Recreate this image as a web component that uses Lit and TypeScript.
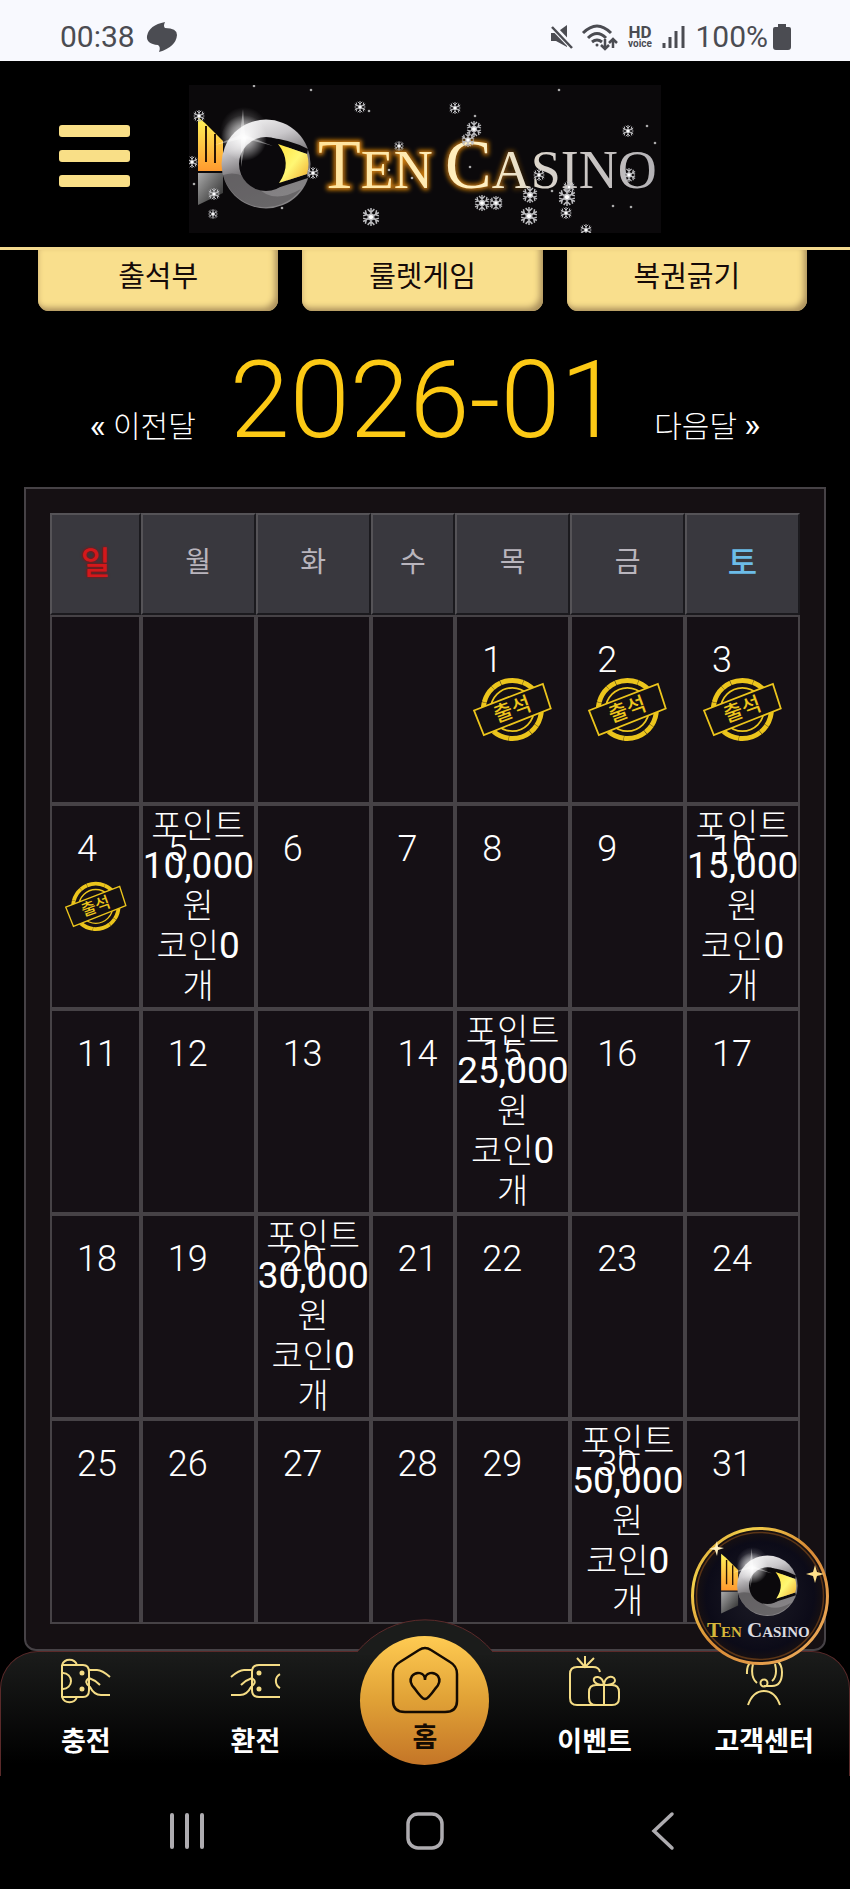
import { LitElement, html, css, svg, nothing } from "lit";
import { customElement } from "lit/decorators.js";

const FLAKES: [number, number, number][] = [
  [10, 31, 6], [171, 22, 6], [3, 77, 6], [25, 109, 6], [24, 129, 5], [124, 88, 6], [182, 132, 9],
  [210, 61, 5], [266, 23, 6], [285, 44, 8], [279, 55, 7], [293, 118, 8], [307, 118, 7], [341, 110, 8],
  [340, 131, 9], [350, 90, 6], [378, 112, 9], [380, 102, 6], [377, 128, 6], [397, 145, 6], [439, 46, 6], [440, 90, 7],
];
const DOTS: [number, number][] = [
  [65, 1], [122, 5], [180, 26], [286, 31], [370, 5], [458, 41], [466, 58], [5, 99], [93, 123], [223, 93],
  [281, 82], [363, 106], [424, 121], [442, 122], [200, 85],
];

const REWARDS: Record<number, string> = { 5: "10,000", 10: "15,000", 15: "25,000", 20: "30,000", 30: "50,000" };
const ATTENDED = new Set([1, 2, 3, 4]);
const DAYS = ["일", "월", "화", "수", "목", "금", "토"];

function fish(prefix: string) {
  return svg`
    <defs>
      <linearGradient id="${prefix}tail" x1="0" y1="0" x2="0" y2="1">
        <stop offset="0" stop-color="#fff45a"/><stop offset="1" stop-color="#ff9a2e"/>
      </linearGradient>
      <linearGradient id="${prefix}ring" x1="0" y1="0" x2="0.35" y2="1">
        <stop offset="0" stop-color="#fff"/><stop offset=".35" stop-color="#c9c7ca"/>
        <stop offset=".6" stop-color="#7d7a7d"/><stop offset="1" stop-color="#858385"/>
      </linearGradient>
      <linearGradient id="${prefix}fin" x1="0" y1="0" x2="1" y2="1">
        <stop offset="0" stop-color="#aaa"/><stop offset="1" stop-color="#222"/>
      </linearGradient>
      <radialGradient id="${prefix}glow">
        <stop offset="0" stop-color="#fff"/><stop offset=".35" stop-color="#fff" stop-opacity=".6"/>
        <stop offset="1" stop-color="#fff" stop-opacity="0"/>
      </radialGradient>
      <linearGradient id="${prefix}beak" x1="0" y1="0" x2="1" y2="1">
        <stop offset="0" stop-color="#ffe23e"/><stop offset=".5" stop-color="#fff774"/><stop offset="1" stop-color="#f0a92c"/>
      </linearGradient>
    </defs>
    <path d="M9 32 16 38 34 56V86H9Z" fill="url(#${prefix}tail)"/>
    <path d="M17 41V77M26 49V78" stroke="#2a1404" stroke-width="2"/>
    <path d="M9 88H34V108L9 120Z" fill="url(#${prefix}fin)"/>
    <circle cx="55" cy="46" r="24" fill="url(#${prefix}glow)" opacity=".45"/>
    <circle cx="77" cy="79" r="44.500" fill="url(#${prefix}ring)"/>
    <path d="M34 90Q52 84 68 102T112 104A44 44 0 0 1 34 90Z" fill="#444244" opacity=".45"/>
    <circle cx="77" cy="79" r="27" fill="#0b090c"/>
    <path d="M80 53Q100 54 119 64L118 69 89 59ZM90 98 118 89 119 93Q104 98 88 103Z" fill="#0b090c"/>
    <path d="M89 59 118 69Q121 79 118 89L90 98Q104 78 89 59Z" fill="url(#${prefix}beak)"/>
    <circle cx="55" cy="53" r="23" fill="url(#${prefix}glow)"/>
    <path d="M54 24 56 50 84 61 57 54 52 82 52 54 26 60 51 50Z" fill="#fff" opacity=".4"/>`;
}

const stamp = html`<svg class="stamp" viewBox="0 0 80 66" role="img" aria-label="출석">
  <g fill="none" stroke="#ecc51c">
    <circle cx="40" cy="33" r="29.500" stroke-width="5" stroke-dasharray="17 .3 9 .4 23 .3"/>
    <circle cx="40" cy="33" r="22" stroke-width="1.800"/>
    <path d="M1 34 71 7 79 32 11 59Z" fill="#141013" stroke-width="1.800"/>
  </g>
  <text class="stamp-text" x="40" y="40" text-anchor="middle" transform="rotate(-20 40 33)" fill="#ecc51c">출석</text>
</svg>`;

@customElement("app-root")
export class AppRoot extends LitElement {
  static styles = css`
    :host {
      display: block;
      background: #000;
      color: #fff;
      font-family: Roboto, "Noto Sans CJK KR", sans-serif;
    }
    * { box-sizing: border-box; }
    a { color: inherit; text-decoration: none; }
    button { font: inherit; border: 0; margin: 0; padding: 0; background: none; color: inherit; cursor: pointer; }
    svg { display: block; overflow: visible; }

    .status {
      display: flex;
      justify-content: space-between;
      align-items: center;
      height: 61px;
      padding: 13px 59px 0 60px;
      background: #f8f9fe;
      color: #4b4c52;
      font-size: 30px;
      line-height: 36px;
    }
    .status-side { display: flex; align-items: center; gap: 11px; }
    .status-right { gap: 8px; }
    .level { display: flex; align-items: center; gap: 5px; margin-left: 2px; }
    .hd { font-family: Roboto, sans-serif; font-weight: 700; }
    .hd-top { font-size: 17px; }
    .hd-bottom { font-size: 10px; }

    .header {
      display: grid;
      grid-template-columns: 1fr auto 1fr;
      align-items: center;
      height: 189px;
      padding: 9px 59px 0;
      border-bottom: 3px solid #f3d98f;
    }
    .menu { display: grid; gap: 13px; width: 71px; padding-bottom: 6px; }
    .menu i { display: block; height: 12px; border-radius: 3px; background: #f9df87; }
    .logo { display: block; background: #0b090b; }
    .logo svg { overflow: hidden; }
    .brand { font-family: "Liberation Serif", serif; }
    .brand-big { font-size: 70px; }
    .brand-small { font-size: 54px; }
    .fab-big { font-size: 21px; }
    .fab-small { font-size: 15px; }

    .tabs { display: flex; gap: 24px; padding: 0 43px 0 38px; }
    .tab {
      flex: 1;
      height: 61px;
      padding-bottom: 8px;
      border-radius: 0 0 11px 11px;
      background: #f9df8d;
      box-shadow: inset -5px -5px 6px -2px #a98f5c, inset 3px 0 5px -2px #d6b977;
      color: #150a08;
      font-size: 29px;
      line-height: 40px;
      font-weight: 400;
    }

    .month {
      display: flex;
      justify-content: center;
      align-items: baseline;
      gap: 34px;
      height: 176px;
      padding-top: 27px;
    }
    .month h1 { margin: 0; color: #fcc915; font-size: 108px; line-height: 124px; font-weight: 300; }
    .step { font-size: 30px; line-height: 40px; font-weight: 300; }
    .arrow { font-size: 34px; font-weight: 400; }

    .panel {
      margin: 0 24px;
      padding: 24px 24px 25px;
      border: 2px solid #464246;
      border-radius: 0 0 12px 12px;
      background: #151013;
    }
    .calendar { width: 100%; table-layout: fixed; border-collapse: separate; border-spacing: 0; }
    .narrow-a { width: 12.1%; }
    .narrow-b { width: 11.3%; }
    th {
      height: 102px;
      padding: 0 0 9px;
      border: 2px solid;
      border-color: #555357 #1b1a1e #1b1a1e #555357;
      background: #39383e;
      color: #b9b5bd;
      font-size: 28px;
      font-weight: 400;
    }
    .sun { color: #d3181b; font-size: 32px; font-weight: 500; text-shadow: 0 0 3px #a00; }
    .sat { color: #6cbce8; font-size: 32px; font-weight: 500; }
    td {
      position: relative;
      height: 205px;
      padding: 0;
      border: 2px solid #464246;
      background: #151015;
      text-align: center;
      vertical-align: middle;
    }
    .first td { height: 189px; }
    .date {
      position: absolute;
      top: 22px;
      left: 25px;
      font-size: 36px;
      line-height: 42px;
      font-weight: 300;
    }
    .reward { margin: 0 0 1px; font-size: 34px; line-height: 40px; font-weight: 300; }
    .reward b { font-size: 37px; line-height: 30px; font-weight: 400; }
    .stamp { width: 71%; margin: 0 auto; }
    .stamp-text { font-family: "Noto Sans CJK KR", sans-serif; font-size: 21px; font-weight: 500; }

    .dock {
      position: relative;
      display: grid;
      grid-template-columns: repeat(5, 1fr);
      height: 125px;
      border: 1px solid #5b2a2a;
      border-bottom: 0;
      border-radius: 38px 38px 0 0;
      background: linear-gradient(#1b1c1b, #000 90%);
    }
    .bump { position: absolute; left: 50%; top: -33px; margin-left: -70px; }
    .item {
      display: flex;
      flex-direction: column;
      align-items: center;
      gap: 16px;
      padding-top: 4px;
      font-size: 27px;
      line-height: 40px;
      font-weight: 700;
      white-space: nowrap;
    }
    .home {
      position: relative;
      justify-self: center;
      width: 129px;
      height: 129px;
      margin-top: -16px;
      padding-top: 10px;
      gap: 6px;
      border-radius: 50%;
      background: linear-gradient(#ffcb52, #e0a136 50%, #c47527);
      color: #140b02;
      font-size: 27px;
      line-height: 36px;
    }
    .fab { position: absolute; right: 20px; top: -125px; }

    .system { display: flex; align-items: center; justify-content: center; gap: 200px; height: 113px; padding-bottom: 4px; }
    .system button { display: flex; justify-content: center; width: 38px; }
  `;

  private cell(day: number) {
    if (day < 1) return html`<td></td>`;
    return html`<td>
      ${REWARDS[day]
        ? html`<p class="reward">포인트<br /><b>${REWARDS[day]}</b><br />원<br />코인<b>0</b><br />개</p>`
        : nothing}
      ${ATTENDED.has(day) ? stamp : nothing}
      <span class="date">${day}</span>
    </td>`;
  }

  private statusBar() {
    return html`<div class="status">
      <div class="status-side">
        <span>00:38</span>
        <svg width="32" height="30" viewBox="0 0 32 30" fill="#4b4c52"><path d="M19 0Q17 4 19 6Q31 6 31 13Q30 25 13 30Q15 25 12 23Q0 22 1 14Q3 3 19 0Z"/></svg>
      </div>
      <div class="status-side status-right">
        <svg width="24" height="24" viewBox="0 0 24 24"><path d="M1 8H6L17 0V22L6 16H1Z" fill="#4b4c52"/><path d="M1 0 23 23" stroke="#f8f9fe" stroke-width="6"/><path d="M2 2 22 23" stroke="#4b4c52" stroke-width="2.500"/></svg>
        <svg width="36" height="27" viewBox="0 0 36 27" fill="none" stroke="#4b4c52" stroke-width="3"><path d="M1 9Q15-5 29 9M6 14Q15 5 24 14M10 18Q15 14 20 18"/><path d="M23 15V25M19 21 23 25 27 21M31 24V15M27 19 31 15 35 19" stroke-width="2.500"/><circle cx="15" cy="21" r="1.500" fill="#4b4c52" stroke="none"/></svg>
        <svg class="hd" width="28" height="24" viewBox="0 0 28 24" fill="#4b4c52" text-anchor="middle"><text class="hd-top" x="14" y="13">HD</text><text class="hd-bottom" x="14" y="22">voice</text></svg>
        <svg width="23" height="24" viewBox="0 0 23 24" stroke="#4b4c52" stroke-width="3"><path d="M2 18V23M8 12V23M14 6V23M21 1V23"/></svg>
        <div class="level"><span>100%</span>
          <svg width="18" height="26" viewBox="0 0 18 26" fill="#4b4c52"><path d="M5 0H13V3H16Q18 3 18 5V23Q18 26 15 26H3Q0 26 0 23V5Q0 3 2 3H5Z"/></svg>
        </div>
      </div>
    </div>`;
  }

  private logo() {
    return html`<a class="logo" href="#" aria-label="Ten Casino">
      <svg width="472" height="148" viewBox="0 0 472 148">
        ${fish("l")}
        <defs>
          <linearGradient id="gold" gradientUnits="userSpaceOnUse" x1="125" y1="0" x2="465" y2="0">
            <stop offset="0" stop-color="#ffe39a"/><stop offset=".5" stop-color="#fff0c4"/>
            <stop offset=".68" stop-color="#d8d2cc"/><stop offset="1" stop-color="#b4b2b6"/>
          </linearGradient>
          <linearGradient id="halo" gradientUnits="userSpaceOnUse" x1="125" y1="0" x2="465" y2="0">
            <stop offset="0" stop-color="#e58a10"/><stop offset=".5" stop-color="#b87010"/><stop offset=".64" stop-color="#c87a10" stop-opacity="0"/>
          </linearGradient>
          <filter id="soft" x="-10%" y="-30%" width="120%" height="160%"><feGaussianBlur stdDeviation="2"/></filter>
        </defs>
        <g class="brand" aria-hidden="true" fill="none" stroke="url(#halo)" stroke-width="4" filter="url(#soft)">
          <text x="129" y="103"><tspan class="brand-big">T</tspan><tspan class="brand-small">EN</tspan></text>
          <text x="256" y="103"><tspan class="brand-big">C</tspan><tspan class="brand-small">ASINO</tspan></text>
        </g>
        <g class="brand" fill="url(#gold)">
          <text x="129" y="103"><tspan class="brand-big">T</tspan><tspan class="brand-small">EN</tspan></text>
          <text x="256" y="103"><tspan class="brand-big">C</tspan><tspan class="brand-small">ASINO</tspan></text>
        </g>
        ${FLAKES.map(([x, y, r]) => svg`<g transform="translate(${x} ${y}) scale(${r / 8})" stroke="#bdbdc0" stroke-width="1.300" fill="none">
          <path d="M0-8V8M-7-4 7 4M-7 4 7-4M-3-7 0-4 3-7M-3 7 0 4 3 7M-7-1-4-2-5-6M7 1 4 2 5 6M-7 1-4 2-5 6M7-1 4-2 5-6"/><circle r="2.500" fill="#fff"/></g>`)}
        ${DOTS.map(([x, y]) => svg`<circle cx="${x}" cy="${y}" r="1.300" fill="#aaa"/>`)}
      </svg>
    </a>`;
  }

  private dock() {
    return html`<nav class="dock">
      <svg class="bump" width="140" height="36" viewBox="0 0 140 36"><path d="M0 36 2 33A88 88 0 0 1 138 33L140 36Z" fill="#1b1c1b"/><path d="M2 33A88 88 0 0 1 138 33" fill="none" stroke="#5b2a2a"/></svg>
      <a class="item" href="#">
        <svg width="50" height="50" viewBox="0 0 50 50" fill="none" stroke="#f4dc85" stroke-width="2"><path d="M1 9A8 8 0 0 1 16 9M1 9V41A8 8 0 0 0 16 41"/><path d="M2 9H22Q28 9 28 16V34Q28 41 22 41H2M2 17A8 8 0 0 1 2 33M28 14H36Q41 14 49 21M28 22Q22 26 29 31Q33 39 40 39H49M28 22Q34 24 39 29"/><circle cx="21" cy="17" r="1.500" fill="#f4dc85"/><circle cx="21" cy="33" r="1.500" fill="#f4dc85"/></svg>
        <span>충전</span>
      </a>
      <a class="item" href="#">
        <svg width="50" height="50" viewBox="0 0 50 50" fill="none" stroke="#f4dc85" stroke-width="2"><path d="M50 9H29Q22 9 22 16V34Q22 41 29 41H50M50 18A8 8 0 0 0 50 32M22 14H14Q9 14 1 21M22 22Q28 26 21 31Q17 39 10 39H1M22 22Q16 24 11 29"/><circle cx="29" cy="17" r="1.500" fill="#f4dc85"/><circle cx="29" cy="33" r="1.500" fill="#f4dc85"/></svg>
        <span>환전</span>
      </a>
      <a class="item home" href="#">
        <svg width="66" height="68" viewBox="0 0 66 68" fill="none" stroke="#140b02" stroke-width="2.500"><path d="M27 4Q33 0 39 4L58 16Q65 20 65 28V55Q65 66 53 66H13Q1 66 1 55V28Q1 20 8 16Z"/><path d="M33 53Q30 53 23 43Q16 36 20 30C24 25 33 26 33 34C33 26 42 25 46 30Q50 36 43 43Q36 53 33 53Z"/></svg>
        <span>홈</span>
      </a>
      <a class="item" href="#">
        <svg width="52" height="50" viewBox="0 0 52 50" fill="none" stroke="#f4dc85" stroke-width="2"><path d="M31 16Q30 11 24 11H8Q1 11 1 18V42Q1 49 8 49H43Q50 49 50 42V36Q50 29 43 29H27Q20 29 20 36V42Q20 49 27 49M16 0V11M8 2 16 11 25 2M35 29V49M35 29C22 29 23 20 29 21Q34 22 35 29C36 20 42 20 45 22C48 26 44 29 35 29"/></svg>
        <span>이벤트</span>
      </a>
      <a class="item" href="#">
        <svg width="52" height="50" viewBox="0 0 52 50" fill="none" stroke="#f4dc85" stroke-width="2"><path d="M10 49Q15 35 26 35T42 49M9 18Q8 2 26 1Q44 2 44 16Q44 30 34 30H26M15 8Q12 21 19 27M37 8Q40 20 34 25"/><circle cx="26" cy="27" r="3.500"/></svg>
        <span>고객센터</span>
      </a>
      <a class="fab" href="#" aria-label="Ten Casino">
        <svg width="138" height="138" viewBox="0 0 138 138">
          <defs>
            <linearGradient id="rim" x1="0" y1="0" x2="1" y2="1"><stop offset="0" stop-color="#c07828"/><stop offset=".2" stop-color="#f3d14a"/><stop offset=".5" stop-color="#d88a35"/><stop offset="1" stop-color="#f0b060"/></linearGradient>
            <radialGradient id="night"><stop offset="0" stop-color="#1d1c26"/><stop offset=".8" stop-color="#0c0b18"/><stop offset="1" stop-color="#1a1210"/></radialGradient>
          </defs>
          <circle cx="69" cy="69" r="67.500" fill="url(#night)" stroke="url(#rim)" stroke-width="3"/>
          <circle cx="69" cy="69" r="63.500" fill="none" stroke="#5b3517" stroke-width="1.500"/>
          <g transform="translate(24 5) scale(.68)">${fish("f")}</g>
          <text class="brand" x="16" y="110" font-weight="700" fill="#d6b63a"><tspan class="fab-big">T</tspan><tspan class="fab-small">EN</tspan></text>
          <text class="brand" x="56" y="110" font-weight="700" fill="#dcdce0"><tspan class="fab-big">C</tspan><tspan class="fab-small">ASINO</tspan></text>
          <path d="M124 38 126 45 133 47 126 49 124 56 122 49 115 47 122 45Z" fill="#ffe08a"/>
          <path d="M26 14 27 20 33 21 27 23 26 29 24 23 18 22 24 20Z" fill="#fff0c0"/>
        </svg>
      </a>
    </nav>`;
  }

  render() {
    return html`
      ${this.statusBar()}
      <header class="header">
        <button class="menu" aria-label="메뉴"><i></i><i></i><i></i></button>
        ${this.logo()}
      </header>
      <main>
        <div class="tabs">
          <button class="tab">출석부</button>
          <button class="tab">룰렛게임</button>
          <button class="tab">복권긁기</button>
        </div>
        <div class="month">
          <a class="step" href="#"><span class="arrow">«</span> 이전달</a>
          <h1>2026-01</h1>
          <a class="step" href="#">다음달 <span class="arrow">»</span></a>
        </div>
        <section class="panel">
          <table class="calendar">
            <colgroup><col class="narrow-a" /><col /><col /><col class="narrow-b" /><col /><col /><col /></colgroup>
            <thead><tr>${DAYS.map((d, i) => html`<th scope="col" class=${i === 0 ? "sun" : i === 6 ? "sat" : ""}>${d}</th>`)}</tr></thead>
            <tbody>
              ${[0, 1, 2, 3, 4].map((w) => html`<tr class=${w === 0 ? "first" : ""}>${DAYS.map((_, i) => this.cell(w * 7 + i - 3))}</tr>`)}
            </tbody>
          </table>
        </section>
      </main>
      ${this.dock()}
      <div class="system">
        <button aria-label="최근 앱"><svg width="36" height="36" viewBox="0 0 36 36" stroke="#aeacb0" stroke-width="4" stroke-linecap="round"><path d="M3 2V34M18 2V34M33 2V34"/></svg></button>
        <button aria-label="홈 화면"><svg width="38" height="38" viewBox="0 0 38 38" fill="none" stroke="#aeacb0" stroke-width="3.500"><rect x="2" y="2" width="34" height="34" rx="10"/></svg></button>
        <button aria-label="뒤로"><svg width="22" height="38" viewBox="0 0 22 38" fill="none" stroke="#aeacb0" stroke-width="3.500" stroke-linecap="round"><path d="M20 2 2 19 20 36"/></svg></button>
      </div>
    `;
  }
}
